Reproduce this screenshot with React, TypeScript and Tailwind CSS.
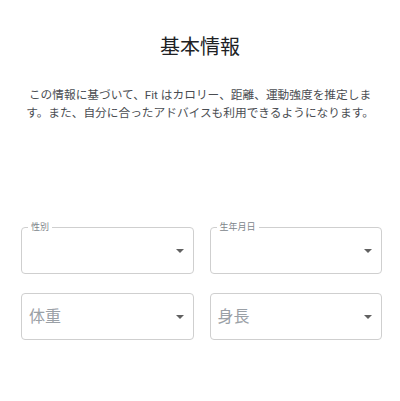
import React from "react";

const FONT = "font-['Roboto','Noto_Sans_CJK_JP',sans-serif]";

function Arrow() {
  return (
    <svg width="8" height="4" viewBox="0 0 8 4" className="shrink-0">
      <path d="M0 0 L4 4 L8 0 Z" fill="#616161" />
    </svg>
  );
}

function SelectField({ label, placeholder }: { label?: string; placeholder?: string }) {
  return (
    <div className="relative h-[47px] rounded-[4px] border border-[#cfcfcf] flex items-center justify-between pl-[7px] pr-[9px]">
      {label && (
        <span className="absolute -top-[7px] left-[6px] px-[3px] bg-white text-[9px] leading-[12px] text-[#80868b]">
          {label}
        </span>
      )}
      <span className="text-[16px] leading-[20px] text-[#9aa0a6]">{placeholder ?? ""}</span>
      <Arrow />
    </div>
  );
}

export default function App() {
  return (
    <div className={`w-full h-[401px] bg-white overflow-hidden ${FONT}`}>
      <h1 className="pt-[33px] text-center text-[20px] leading-[28px] text-[#202124]">基本情報</h1>
      <p className="mt-[25px] mx-auto max-w-[356px] text-center text-[11.7px] leading-[18px] text-[#4a4d52]">
        この情報に基づいて、Fit はカロリー、距離、運動強度を推定します。また、自分に合ったアドバイスも利用できるようになります。
      </p>
      <div className="mt-[105px] grid grid-cols-2 gap-x-[16px] gap-y-[19px] pl-[21px] pr-[18px]">
        <SelectField label="性別" />
        <SelectField label="生年月日" />
        <SelectField placeholder="体重" />
        <SelectField placeholder="身長" />
      </div>
    </div>
  );
}
